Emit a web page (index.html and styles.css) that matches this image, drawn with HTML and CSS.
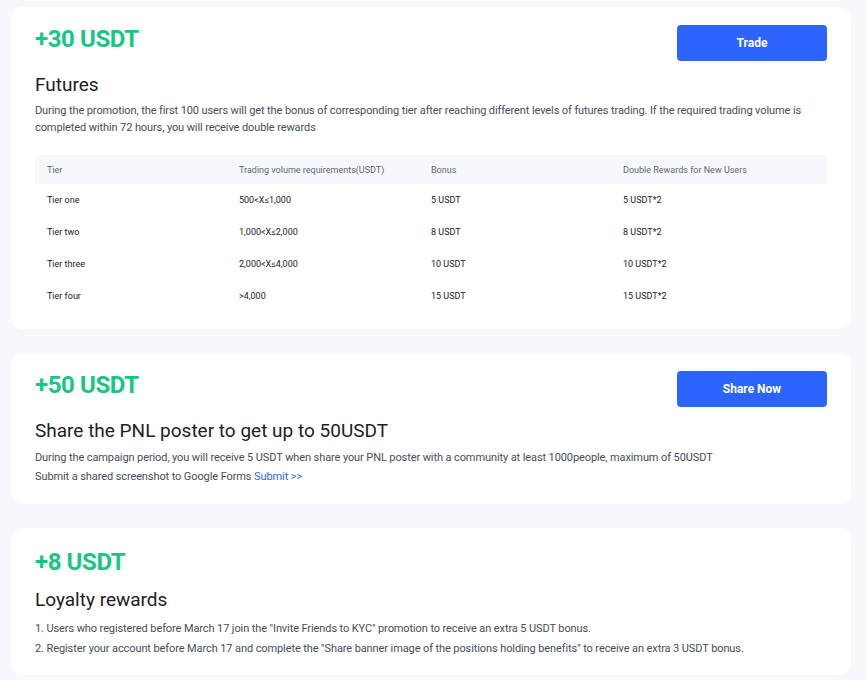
FILE: index.html
```html
<!DOCTYPE html>
<html lang="en">
<head>
    <meta charset="UTF-8">
    <meta name="viewport" content="width=device-width, initial-scale=1.0">
    <title>Campaign Rewards</title>
    <link rel="stylesheet" href="styles.css">
</head>
<body>
    <div class="rewards">
        <section class="card">
            <div class="card-head">
                <div class="amount">+30 USDT</div>
                <a class="btn" href="#">Trade</a>
            </div>
            <h2>Futures</h2>
            <p class="desc">During the promotion, the first 100 users will get the bonus of corresponding tier after reaching different levels of futures trading. If the required trading volume is completed within 72 hours, you will receive double rewards</p>

            <div class="tiers">
                <div class="tier-row tier-header">
                    <div>Tier</div>
                    <div>Trading volume requirements(USDT)</div>
                    <div>Bonus</div>
                    <div>Double Rewards for New Users</div>
                </div>
                <div class="tier-row">
                    <div>Tier one</div>
                    <div>500&lt;X&le;1,000</div>
                    <div>5 USDT</div>
                    <div>5 USDT*2</div>
                </div>
                <div class="tier-row">
                    <div>Tier two</div>
                    <div>1,000&lt;X&le;2,000</div>
                    <div>8 USDT</div>
                    <div>8 USDT*2</div>
                </div>
                <div class="tier-row">
                    <div>Tier three</div>
                    <div>2,000&lt;X&le;4,000</div>
                    <div>10 USDT</div>
                    <div>10 USDT*2</div>
                </div>
                <div class="tier-row">
                    <div>Tier four</div>
                    <div>&gt;4,000</div>
                    <div>15 USDT</div>
                    <div>15 USDT*2</div>
                </div>
            </div>
        </section>

        <section class="card">
            <div class="card-head">
                <div class="amount">+50 USDT</div>
                <a class="btn" href="#">Share Now</a>
            </div>
            <h2>Share the PNL poster to get up to 50USDT</h2>
            <p class="desc desc-mid">During the campaign period, you will receive 5 USDT when share your PNL poster with a community at least 1000people, maximum of 50USDT<br>
            Submit a shared screenshot to Google Forms <a class="link" href="#">Submit &gt;&gt;</a></p>
        </section>

        <section class="card card-plain">
            <div class="card-head">
                <div class="amount">+8 USDT</div>
            </div>
            <h2>Loyalty rewards</h2>
            <p class="desc desc-wide">1. Users who registered before March 17 join the "Invite Friends to KYC" promotion to receive an extra 5 USDT bonus.<br>
            2. Register your account before March 17 and complete the "Share banner image of the positions holding benefits" to receive an extra 3 USDT bonus.</p>
        </section>
    </div>
</body>
</html>
```

FILE: styles.css
```css
body {
    margin: 0;
    background-color: #f7f8fc;
    font-family: Roboto, "Noto Sans", Arial, sans-serif;
    color: #1e2026;
}
.rewards {
    width: 840px;
    padding: 7px 0 0 11px;
    display: flex;
    flex-direction: column;
    gap: 24px;
}
.card {
    background-color: #fff;
    border-radius: 12px;
    padding: 18px 24px 18px 24px;
}
.card-plain {
    padding-top: 20px;
    padding-bottom: 16px;
}
.card-head {
    display: flex;
    justify-content: space-between;
    align-items: flex-start;
}
.amount {
    font-size: 24px;
    font-weight: 700;
    color: #16c784;
    line-height: 28px;
    letter-spacing: -0.4px;
}
.btn {
    display: block;
    width: 150px;
    height: 36px;
    line-height: 36px;
    text-align: center;
    background-color: #2d64ff;
    color: #fff;
    font-size: 12px;
    font-weight: 700;
    border-radius: 4px;
    text-decoration: none;
}
h2 {
    font-size: 19px;
    font-weight: 400;
    margin: 11px 0 5px;
    line-height: 25px;
}
.desc {
    margin: 0;
    font-size: 11px;
    letter-spacing: -0.1px;
    line-height: 17px;
    color: #474d57;
}
.desc-mid {
    line-height: 19px;
}
.desc-wide {
    line-height: 20px;
    margin-top: 7px;
}
.link {
    color: #2d64ff;
    text-decoration: none;
}
.tiers {
    margin-top: 19px;
    margin-bottom: -1px;
}
.tier-row {
    display: grid;
    grid-template-columns: 192px 192px 192px 1fr;
    padding-left: 12px;
    height: 32px;
    align-items: center;
    font-size: 9px;
    color: #1e2026;
}
.tier-header {
    height: 29px;
    background-color: #f7f8fc;
    color: #5e6673;
}
```
